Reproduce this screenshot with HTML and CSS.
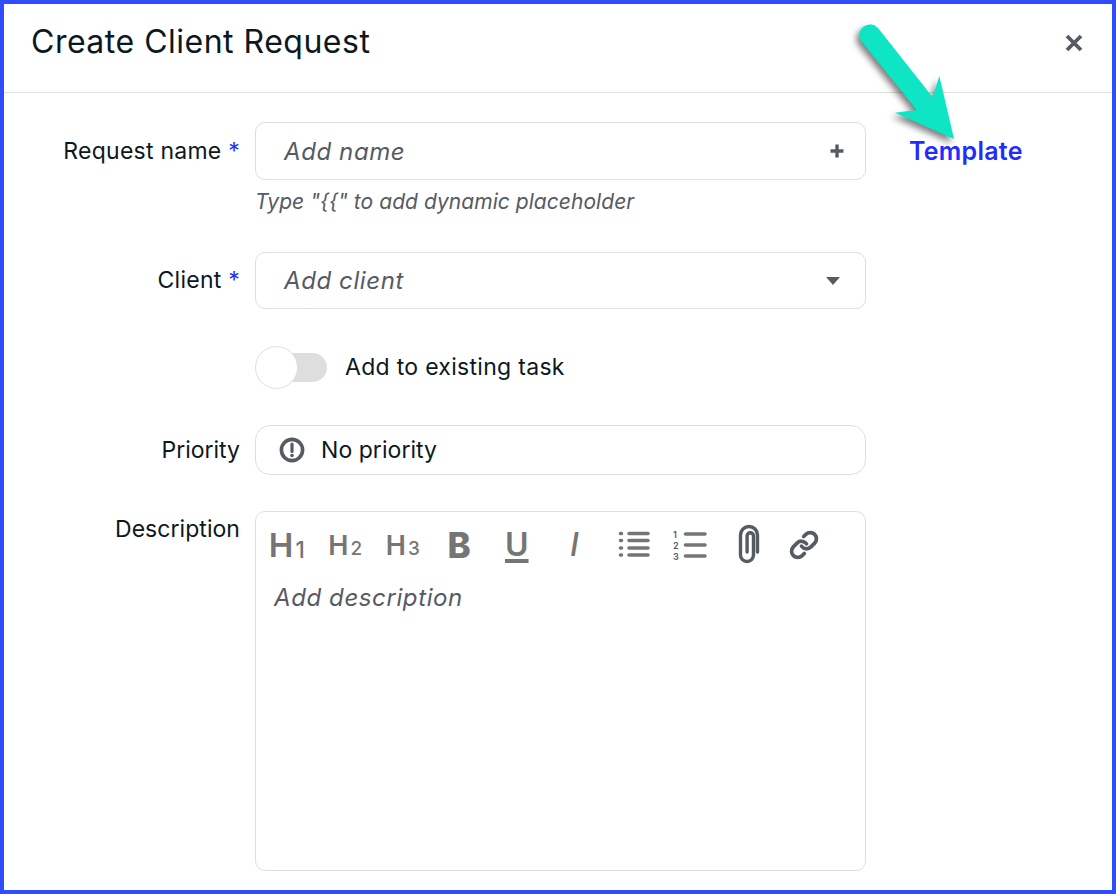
FILE: index.html
```html
<!DOCTYPE html>
<html lang="en">

<head>
    <meta charset="UTF-8">
    <meta name="viewport" content="width=device-width, initial-scale=1.0">
    <title>Create Client Request</title>
    <link rel="stylesheet" href="styles.css">
</head>

<body>

    <div class="modal">
        <div class="modal-header">
            <h1>Create Client Request</h1>
            <svg class="close-icon" width="18" height="18" viewBox="0 0 18 18">
                <path d="M2 2L16 16M16 2L2 16" />
            </svg>
        </div>

        <!-- Callout arrow over the header line -->
        <svg class="callout-arrow" width="120" height="130" viewBox="850 20 120 130">
            <path d="M862 42A10 10 0 0 1 878 28L932.7 97.3L939.3 76L954 139L895 112.7L916.7 110Z" />
        </svg>

        <div class="modal-body">
            <div class="form-row row-name">
                <label class="field-label">Request name <span class="required">*</span></label>
                <div class="field">
                    <div class="text-input">
                        <span class="placeholder">Add name</span>
                        <svg class="plus-icon" width="16" height="16" viewBox="0 0 16 16">
                            <path d="M8 1.5V14.5M1.5 8H14.5" />
                        </svg>
                    </div>
                    <p class="hint">Type "{{" to add dynamic placeholder</p>
                </div>
                <a class="template-link">Template</a>
            </div>

            <div class="form-row row-client">
                <label class="field-label">Client <span class="required">*</span></label>
                <div class="field">
                    <div class="text-input select-input">
                        <span class="placeholder">Add client</span>
                        <span class="caret"></span>
                    </div>
                </div>
            </div>

            <div class="form-row row-toggle">
                <span class="field-label"></span>
                <div class="toggle-wrap">
                    <span class="toggle"><span class="toggle-knob"></span></span>
                    <span class="toggle-text">Add to existing task</span>
                </div>
            </div>

            <div class="form-row row-priority">
                <label class="field-label">Priority</label>
                <div class="priority-input">
                    <svg width="26" height="26" viewBox="0 0 26 26">
                        <circle cx="13" cy="13" r="10.6" fill="none" stroke="#555a63" stroke-width="3.6" />
                        <path d="M13 7V14.5" fill="none" stroke="#555a63" stroke-width="3.2" stroke-linecap="round" />
                        <circle cx="13" cy="18.5" r="1.8" fill="#555a63" />
                    </svg>
                    <span>No priority</span>
                </div>
            </div>

            <div class="form-row row-description">
                <label class="field-label">Description</label>
                <div class="editor">
                    <div class="toolbar">
                        <span class="tool tool-h1">H<small>1</small></span>
                        <span class="tool tool-h">H<small>2</small></span>
                        <span class="tool tool-h">H<small>3</small></span>
                        <span class="tool tool-b">B</span>
                        <span class="tool tool-u">U</span>
                        <span class="tool tool-i">I</span>
                        <span class="tool">
                            <svg width="30" height="26" viewBox="0 0 30 26" class="list-icon bullet-icon">
                                <path d="M1.5 1.5H2.5M1.5 8.5H2.5M1.5 16H2.5M1.5 23H2.5" />
                                <path d="M10 1.5H29M10 8.5H29M10 16H29M10 23H29" />
                            </svg>
                        </span>
                        <span class="tool">
                            <svg width="34" height="30" viewBox="0 0 34 30" class="list-icon">
                                <text x="1" y="8" class="list-num">1</text>
                                <text x="1" y="19" class="list-num">2</text>
                                <text x="1" y="30" class="list-num">3</text>
                                <path d="M13.5 4H33M13.5 15H33M13.5 26H33" />
                            </svg>
                        </span>
                        <span class="tool">
                            <svg width="24" height="42" viewBox="0 0 24 42" class="clip-icon">
                                <path d="M20.5 28V11a8.5 8.5 0 0 0-17 0V31a6.5 6.5 0 0 0 13 0V12a3.2 3.2 0 0 0-6.4 0V28" />
                            </svg>
                        </span>
                        <span class="tool">
                            <svg width="30" height="30" viewBox="0 0 24 24" class="link-icon">
                                <path d="M10 13a5 5 0 0 0 7.54.54l3-3a5 5 0 0 0-7.07-7.07l-1.72 1.71" />
                                <path d="M14 11a5 5 0 0 0-7.54-.54l-3 3a5 5 0 0 0 7.07 7.07l1.71-1.71" />
                            </svg>
                        </span>
                    </div>
                    <div class="editor-placeholder">Add description</div>
                </div>
            </div>
        </div>
    </div>

</body>

</html>
```

FILE: styles.css
```css
/* Global Styles */
* {
    box-sizing: border-box;
}

body {
    font-family: Inter, "Liberation Sans", sans-serif;
    background-color: #fff;
    color: #0c1821;
    margin: 0;
    padding: 0;
}

.modal {
    position: relative;
    width: 1116px;
    height: 894px;
    border: 4px solid #2f4dfb;
    overflow: hidden;
    background-color: #fff;
}

/* Header */
.modal-header {
    display: flex;
    justify-content: space-between;
    align-items: center;
    height: 89px;
    padding: 0 29px 10px 27px;
    border-bottom: 1px solid #dedede;
}

h1 {
    margin: 0 0 4px;
    font-size: 32px;
    font-weight: 400;
    letter-spacing: 0.5px;
}

.close-icon path {
    fill: none;
    stroke: #555a63;
    stroke-width: 3.8;
}

.callout-arrow {
    position: absolute;
    left: 846px;
    top: 16px;
    overflow: visible;
    filter: drop-shadow(-3px 4px 3px rgba(0, 0, 0, 0.5));
}

.callout-arrow path {
    fill: #0de5c4;
}

/* Form rows */
.modal-body {
    padding-top: 29px;
}

.form-row {
    display: flex;
    align-items: flex-start;
}

.field-label {
    flex: 0 0 236px;
    margin-right: 15px;
    text-align: right;
    font-size: 23px;
    line-height: 58px;
    letter-spacing: 0.25px;
}

.required {
    color: #2233ff;
}

.field {
    flex: 0 0 611px;
}

.text-input {
    display: flex;
    justify-content: space-between;
    align-items: center;
    height: 58px;
    padding: 0 20px 0 28px;
    border: 1px solid #dedede;
    border-radius: 10px;
}

.select-input {
    height: 57px;
}

.placeholder,
.editor-placeholder {
    font-size: 24px;
    font-style: italic;
    letter-spacing: 0.6px;
    color: #555a63;
}

.plus-icon path {
    fill: none;
    stroke: #555a63;
    stroke-width: 3.4;
}

.caret {
    width: 0;
    height: 0;
    border-left: 7.5px solid transparent;
    border-right: 7.5px solid transparent;
    border-top: 8px solid #555a63;
    margin-right: 5px;
}

.hint {
    margin: 8px 0 0;
    font-size: 21px;
    line-height: 28px;
    font-style: italic;
    letter-spacing: 0.05px;
    color: #555a63;
}

.template-link {
    margin-left: 43px;
    font-size: 25px;
    font-weight: 600;
    line-height: 59px;
    letter-spacing: 0.25px;
    color: #1f2dff;
}

.row-client {
    margin-top: 36px;
}

.row-client .field-label {
    line-height: 57px;
}

/* Toggle */
.row-toggle {
    margin-top: 37px;
}

.row-toggle .field-label {
    line-height: 42px;
}

.toggle-wrap {
    display: flex;
    align-items: center;
    height: 42px;
}

.toggle {
    position: relative;
    display: block;
    width: 70px;
    height: 29px;
    margin-left: 2px;
    background-color: #dedede;
    border-radius: 15px;
}

.toggle-knob {
    position: absolute;
    left: -2px;
    top: -7px;
    width: 43px;
    height: 43px;
    background-color: #fff;
    border: 1px solid #dedede;
    border-radius: 50%;
}

.toggle-text {
    margin-left: 18px;
    font-size: 23px;
    letter-spacing: 0.3px;
}

/* Priority */
.row-priority {
    margin-top: 37px;
}

.row-priority .field-label {
    line-height: 50px;
    letter-spacing: 0;
}

.priority-input {
    flex: 0 0 611px;
    display: flex;
    align-items: center;
    gap: 16px;
    height: 50px;
    padding-left: 23px;
    border: 1px solid #dedede;
    border-radius: 15px;
    font-size: 23px;
    letter-spacing: 0.05px;
}

/* Description editor */
.row-description {
    margin-top: 36px;
}

.row-description .field-label {
    line-height: 36px;
    letter-spacing: 0.05px;
}

.editor {
    flex: 0 0 611px;
    height: 360px;
    border: 1px solid #dedede;
    border-radius: 10px;
}

.toolbar {
    display: flex;
    align-items: center;
    height: 64px;
    padding: 2px 0 0 2px;
}

.tool {
    flex: 0 0 57.5px;
    display: flex;
    justify-content: center;
    align-items: center;
    color: #757575;
    font-size: 27px;
    line-height: 1;
    font-weight: 600;
}

.tool small {
    font-size: 0.7em;
    font-weight: 500;
    align-self: flex-end;
    margin-left: 2px;
}

.tool-h {
    padding-left: 2px;
}

.tool-h1 {
    font-size: 33px;
}

.tool-h1 small {
    font-size: 0.68em;
}

.tool-b {
    font-size: 35px;
    font-weight: 800;
}

.tool-u {
    font-size: 32px;
    text-decoration: underline;
    text-decoration-thickness: 4px;
    text-underline-offset: 3px;
}

.tool-i {
    font-size: 32px;
    font-style: italic;
    font-weight: 500;
}

.list-icon {
    overflow: visible;
}

.list-icon path {
    fill: none;
    stroke: #757575;
    stroke-width: 3.6;
    stroke-linecap: round;
}

.list-num {
    font-size: 9px;
    font-weight: 600;
    fill: #555a63;
}

.clip-icon,
.bullet-icon {
    margin-left: 4px;
}

.clip-icon path,
.link-icon path {
    fill: none;
    stroke: #555a63;
    stroke-linecap: round;
}

.clip-icon path {
    stroke-width: 3.4;
}

.link-icon path {
    stroke-width: 3;
}

.editor-placeholder {
    padding-left: 18px;
    line-height: 44px;
}
```
